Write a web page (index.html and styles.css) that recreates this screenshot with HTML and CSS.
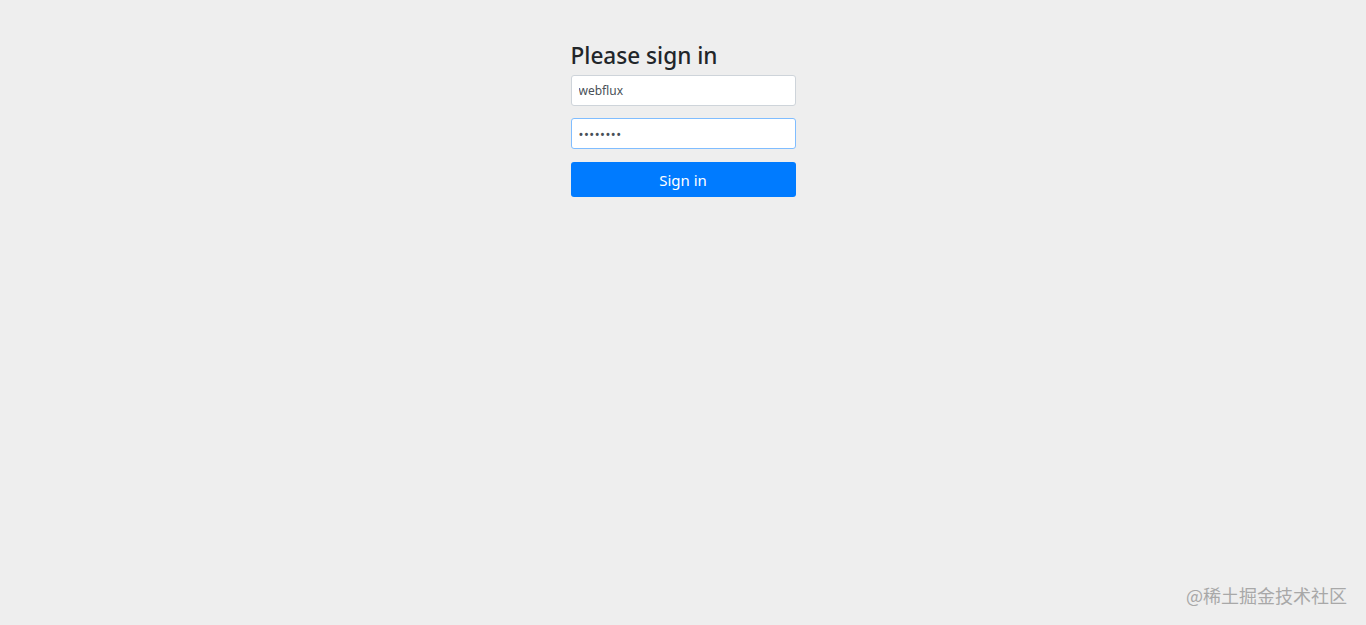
FILE: index.html
```html
<!DOCTYPE html>
<html lang="en">
<head>
    <meta charset="UTF-8">
    <meta name="viewport" content="width=device-width, initial-scale=1.0">
    <title>Please sign in</title>
    <link rel="stylesheet" href="styles.css">
</head>
<body>
    <div class="container">
        <form class="form-signin" method="post" action="/login">
            <h2 class="form-signin-heading">Please sign in</h2>
            <p>
                <label for="username" class="sr-only">Username</label>
                <input type="text" id="username" name="username" class="form-control" value="webflux" placeholder="Username">
            </p>
            <p class="last">
                <label for="password" class="sr-only">Password</label>
                <input type="password" id="password" name="password" class="form-control focused" value="password" placeholder="Password">
            </p>
            <button class="btn-primary" type="submit">Sign in</button>
        </form>
    </div>

    <div class="watermark">@稀土掘金技术社区</div>
</body>
</html>
```

FILE: styles.css
```css
body {
    margin: 0;
    background-color: #eee;
    font-family: "Noto Sans", "Open Sans", Arial, sans-serif;
    color: #212529;
    min-height: 625px;
}

.container {
    display: flex;
    justify-content: center;
    padding-top: 39px;
}

.form-signin {
    width: 225px;
}

.form-signin-heading {
    margin: 0 0 3px 0;
    font-size: 22.6px;
    font-weight: 500;
    line-height: 33px;
}

.form-signin p {
    margin: 0 0 12px 0;
}

.form-signin p.last {
    margin-bottom: 13px;
}

.sr-only {
    position: absolute;
    width: 1px;
    height: 1px;
    overflow: hidden;
    clip: rect(0, 0, 0, 0);
}

.form-control {
    display: block;
    box-sizing: border-box;
    width: 100%;
    height: 31px;
    padding: 0 7px;
    font-family: "Noto Sans", Arial, sans-serif;
    font-size: 12px;
    line-height: 29px;
    color: #495057;
    background: white;
    border: 1px solid #ced4da;
    border-radius: 3px;
    outline: none;
}

.form-control.focused {
    border-color: #80bdff;
    font-size: 13px;
    letter-spacing: 0.5px;
}

.btn-primary {
    display: block;
    width: 100%;
    height: 35px;
    font-family: "Noto Sans", Arial, sans-serif;
    font-size: 15px;
    color: white;
    background: #007bff;
    border: none;
    border-radius: 3px;
    cursor: pointer;
}

.watermark {
    position: absolute;
    right: 19px;
    top: 582px;
    font-family: "Noto Sans CJK SC", sans-serif;
    font-size: 18px;
    color: #a8a8a8;
}
```
